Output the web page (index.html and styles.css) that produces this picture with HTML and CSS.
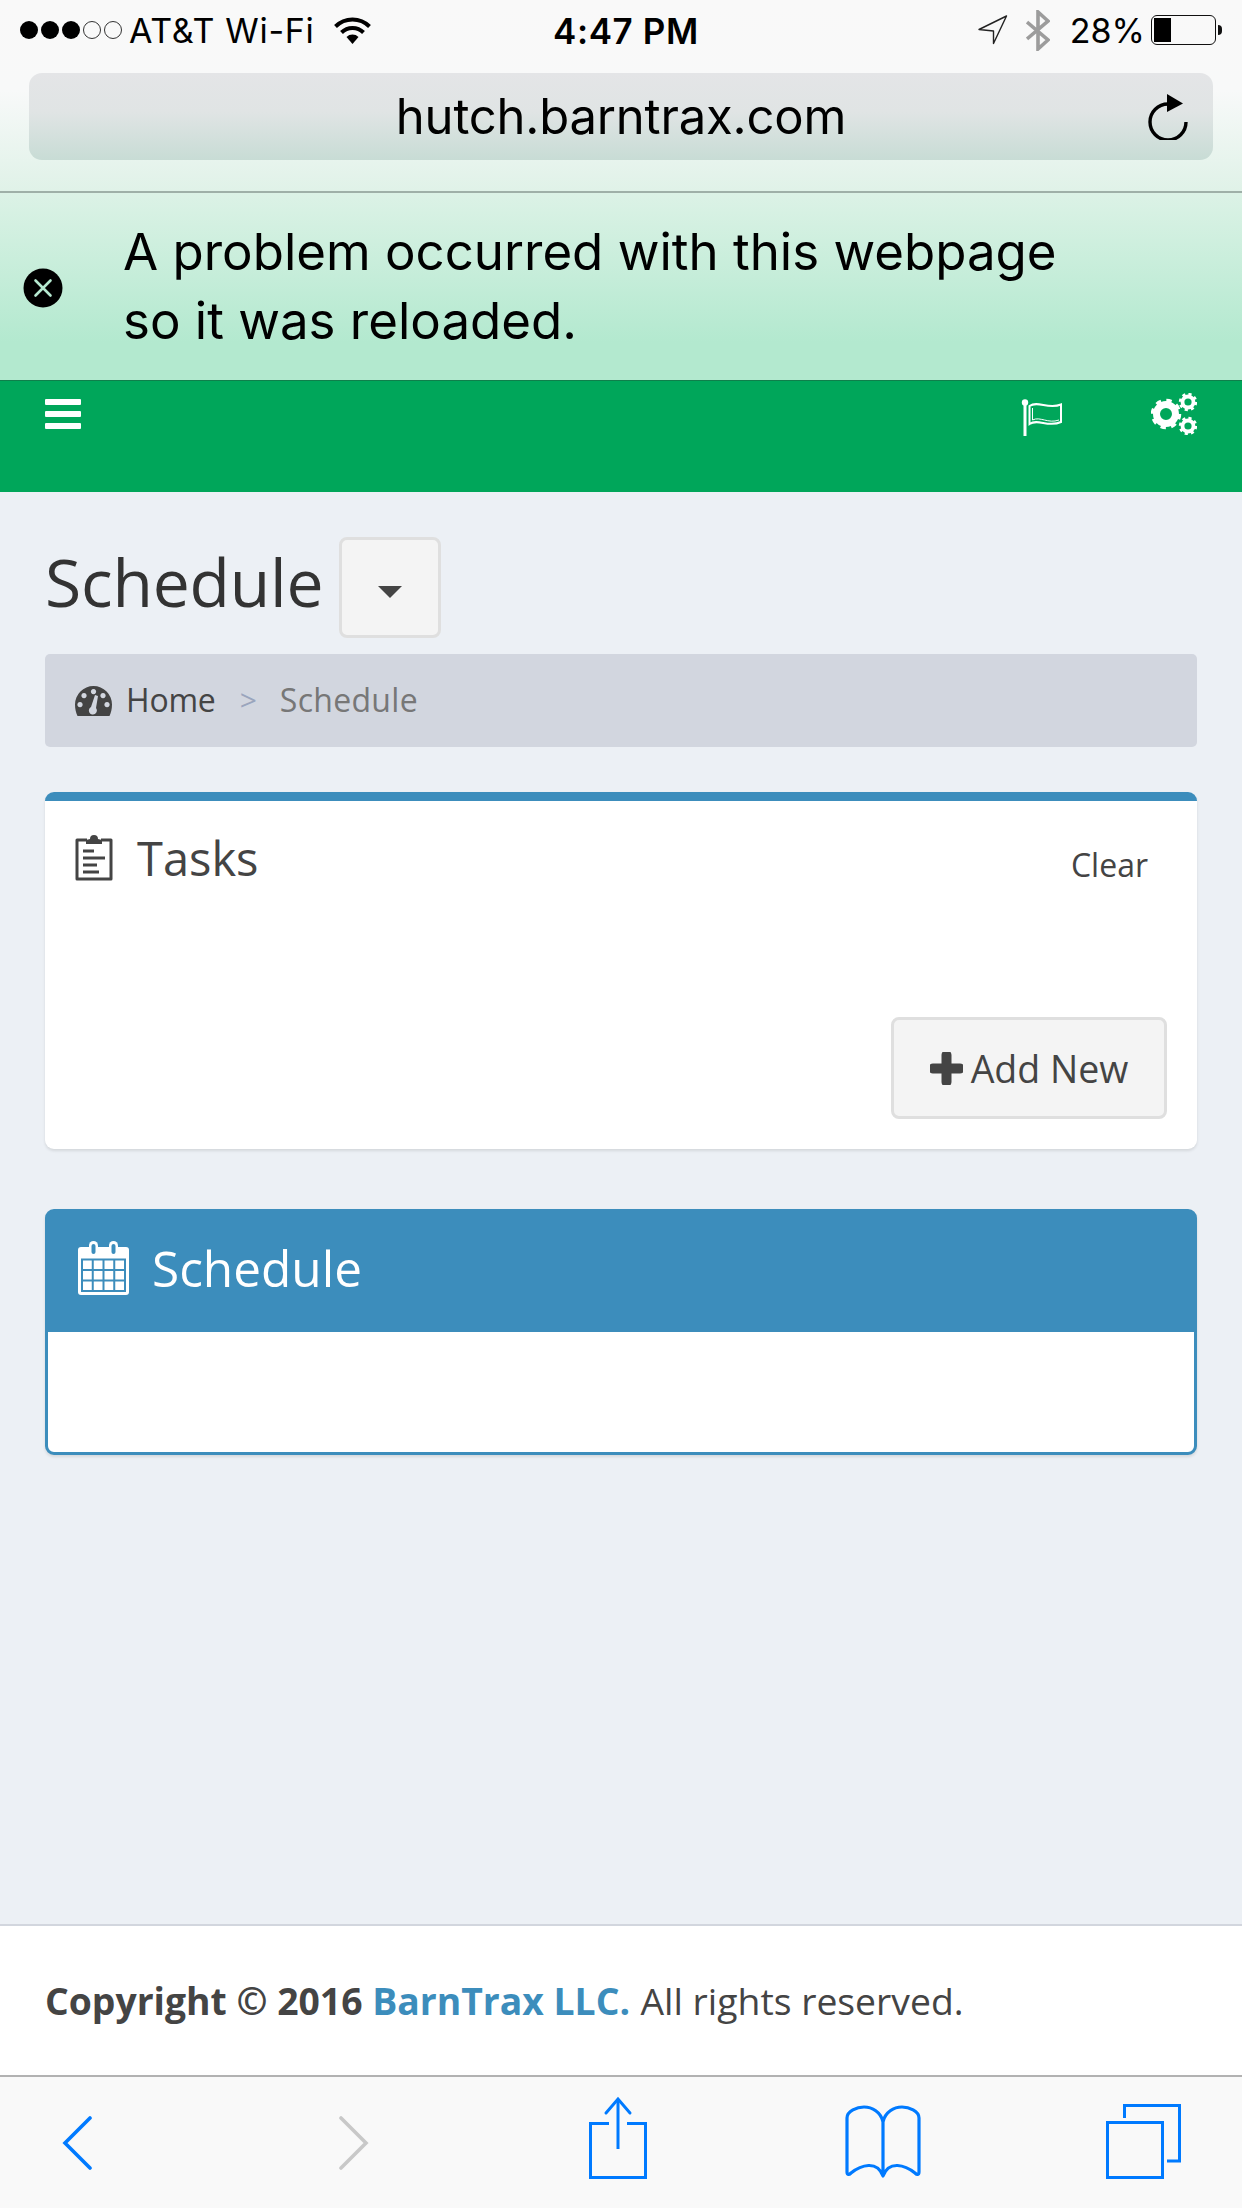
FILE: index.html
```html
<!DOCTYPE html>
<html lang="en">
<head>
    <meta charset="UTF-8">
    <meta name="viewport" content="width=device-width, initial-scale=1.0">
    <title>Schedule</title>
    <link rel="stylesheet" href="styles.css">
</head>
<body>
    <header class="chrome">
        <div class="status-bar">
            <div class="status-left">
                <div class="signal">
                    <span class="dot"></span><span class="dot"></span><span class="dot"></span>
                    <span class="dot empty"></span><span class="dot empty"></span>
                </div>
                <span class="carrier">AT&amp;T Wi-Fi</span>
                <svg class="wifi" width="37" height="28" viewBox="0 0 37 28">
                    <path d="M1.5 10.5 A24 24 0 0 1 35.5 10.5" fill="none" stroke="#000" stroke-width="4"/>
                    <path d="M7.5 16.5 A15.5 15.5 0 0 1 29.5 16.5" fill="none" stroke="#000" stroke-width="4"/>
                    <path d="M12.5 21 A8.5 8.5 0 0 1 24.5 21 L18.5 28 Z" fill="#000"/>
                </svg>
            </div>
            <span class="time">4:47 PM</span>
            <div class="status-right">
                <svg class="location" width="30" height="30" viewBox="0 0 30 30">
                    <path d="M28.5 1 L1 14.5 L15.5 16 L15.5 28.5 Z" fill="none" stroke="#222" stroke-width="1.4" stroke-linejoin="round"/>
                </svg>
                <svg class="bluetooth" width="24" height="41" viewBox="0 0 24 41">
                    <path d="M1 12 L22 30 L12 39 L12 2 L22 11 L1 29" fill="none" stroke="#9c9c9c" stroke-width="3.6"/>
                </svg>
                <span class="battery-text">28%</span>
                <div class="battery"><div class="battery-fill"></div></div>
                <div class="battery-nub"></div>
            </div>
        </div>
        <div class="url-bar">
            <span class="url">hutch.barntrax.com</span>
            <svg class="reload" width="42" height="46" viewBox="0 0 42 46">
                <path d="M21 10 A18 18 0 1 0 39 28" fill="none" stroke="#000" stroke-width="3.4"/>
                <path d="M20 0 L36 9.5 L20 18 Z" fill="#000"/>
            </svg>
        </div>
    </header>

    <div class="banner">
        <svg class="banner-close" width="40" height="40" viewBox="0 0 40 40">
            <circle cx="20" cy="20" r="19.5" fill="#000"/>
            <path d="M12.5 12.5 L27.5 27.5 M27.5 12.5 L12.5 27.5" stroke="#b5e9d0" stroke-width="2.6" stroke-linecap="round"/>
        </svg>
        <p class="banner-text">A problem occurred with this webpage<br>so it was reloaded.</p>
    </div>

    <nav class="navbar">
        <div class="hamburger"><span></span><span></span><span></span></div>
        <svg class="nav-flag" width="42" height="38" viewBox="0 0 42 38">
            <rect x="2.5" y="3" width="3" height="34" fill="#fff"/>
            <circle cx="4" cy="3.5" r="3.2" fill="#fff"/>
            <path d="M8.5 7 C17 1 27 11 40 5.5 L40 23 C27 29 17 19 8.5 25 Z" fill="none" stroke="#fff" stroke-width="2"/>
            <path d="M11.5 9 L11.5 21 C19 17 27 25 38 21" fill="none" stroke="#fff" stroke-width="1"/>
        </svg>
        <svg class="nav-cogs" width="46" height="42" viewBox="0 0 46 42">
            <circle cx="15" cy="21" r="9.5" fill="none" stroke="#fff" stroke-width="7"/>
            <circle cx="15" cy="21" r="13" fill="none" stroke="#fff" stroke-width="4.5" stroke-dasharray="5.1 5.1"/>
            <circle cx="37" cy="9" r="5.5" fill="none" stroke="#fff" stroke-width="3.8"/>
            <circle cx="37" cy="9" r="7.6" fill="none" stroke="#fff" stroke-width="3.2" stroke-dasharray="3 3"/>
            <circle cx="37" cy="33" r="5.5" fill="none" stroke="#fff" stroke-width="3.8"/>
            <circle cx="37" cy="33" r="7.6" fill="none" stroke="#fff" stroke-width="3.2" stroke-dasharray="3 3"/>
        </svg>
    </nav>

    <main class="content">
        <div class="page-title">
            <h1>Schedule</h1>
            <button class="btn btn-caret" type="button"><span class="caret"></span></button>
        </div>

        <div class="breadcrumb">
            <svg class="crumb-icon" width="37" height="30" viewBox="0 0 37 30">
                <path fill-rule="evenodd" fill="#444" d="M18.5 0 A18.5 18.5 0 0 1 37 18.5 C37 23 36 27 34.500 30 L2.500 30 C1 27 0 23 0 18.5 A18.5 18.5 0 0 1 18.500 0 Z M18.500 3 a2.600 2.600 0 1 0 .01 0 Z M9 7 a2.600 2.600 0 1 0 .01 0 Z M28 7 a2.600 2.600 0 1 0 .01 0 Z M5 16 a2.600 2.600 0 1 0 .01 0 Z M32 16 a2.600 2.600 0 1 0 .01 0 Z M20 9 L16 21 a4 4 0 1 0 5 1 L23 10 Z"/>
            </svg>
            <span class="crumb-home">Home</span>
            <span class="crumb-sep">&gt;</span>
            <span class="crumb-current">Schedule</span>
        </div>

        <section class="box box-tasks">
            <div class="box-head">
                <svg class="tasks-icon" width="38" height="48" viewBox="0 0 38 48">
                    <path d="M12 7 L2 7 L2 46 L36 46 L36 7 L26 7" fill="none" stroke="#444" stroke-width="3" stroke-linejoin="round"/>
                    <path d="M11 11 L11 7 L15 6 A4 4 0 1 1 23 6 L27 7 L27 11 Z" fill="#444"/>
                    <path d="M8 18 H19 M8 25 H30 M8 32 H22 M8 39 H24" stroke="#444" stroke-width="3"/>
                </svg>
                <h3 class="box-title">Tasks</h3>
                <a class="clear-link">Clear</a>
            </div>
            <div class="box-foot">
                <button class="btn btn-add" type="button">
                    <svg width="33" height="33" viewBox="0 0 33 33">
                        <path d="M16.500 3 V30 M3 16.500 H30" stroke="#444" stroke-width="10" stroke-linecap="round" stroke-linejoin="round" fill="none"/>
                    </svg>
                    <span>Add New</span>
                </button>
            </div>
        </section>

        <section class="box box-schedule">
            <div class="box-head-solid">
                <svg class="calendar-icon" width="51" height="54" viewBox="0 0 51 54">
                    <path fill="#fff" d="M3 6 H48 A3 3 0 0 1 51 9 V51 A3 3 0 0 1 48 54 H3 A3 3 0 0 1 0 51 V9 A3 3 0 0 1 3 6 Z"/>
                    <rect x="11" y="0" width="9" height="15" rx="4.500" fill="#fff"/>
                    <rect x="31" y="0" width="9" height="15" rx="4.500" fill="#fff"/>
                    <rect x="13.500" y="3" width="4" height="10" rx="2" fill="#3c8dbc"/>
                    <rect x="33.500" y="3" width="4" height="10" rx="2" fill="#3c8dbc"/>
                    <path d="M4 18.500 H47 V50 H4 Z M14.750 18.500 V50 M25.500 18.500 V50 M36.250 18.500 V50 M4 29 H47 M4 39.500 H47" fill="none" stroke="#3c8dbc" stroke-width="2"/>
                </svg>
                <h3 class="box-title light">Schedule</h3>
            </div>
            <div class="box-body"></div>
        </section>
    </main>

    <footer class="footer">
        <strong>Copyright &copy; 2016 <a class="footer-link">BarnTrax LLC.</a></strong> All rights reserved.
    </footer>

    <div class="toolbar">
        <svg class="tb-back" width="30" height="132" viewBox="0 0 30 132">
            <path d="M28 42 L3 67 L28 92" fill="none" stroke="#007aff" stroke-width="3.600" stroke-linecap="round"/>
        </svg>
        <svg class="tb-forward" width="30" height="132" viewBox="0 0 30 132">
            <path d="M2 42 L27 67 L2 92" fill="none" stroke="#c8c8c8" stroke-width="3.600" stroke-linecap="round"/>
        </svg>
        <svg class="tb-share" width="58" height="132" viewBox="0 0 58 132">
            <path d="M20 47.500 H1.500 V101.500 H56.500 V47.500 H38" fill="none" stroke="#007aff" stroke-width="3"/>
            <path d="M29 24 V73" fill="none" stroke="#007aff" stroke-width="3"/>
            <path d="M17 37 L29 23 L41 37" fill="none" stroke="#007aff" stroke-width="3" stroke-linecap="round"/>
        </svg>
        <svg class="tb-book" width="76" height="132" viewBox="0 0 76 132">
            <path d="M38 46 C36 36 27 31 19 31 C12 31 2 35 2 42 L2 96 C2 99 4 99 6 97 C16 89 32 84 38 100 C44 84 60 89 70 97 C72 99 74 99 74 96 L74 42 C74 35 64 31 57 31 C49 31 40 36 38 46 L38 99" fill="none" stroke="#007aff" stroke-width="3.200" stroke-linejoin="round"/>
        </svg>
        <svg class="tb-tabs" width="76" height="132" viewBox="0 0 76 132">
            <rect x="1.500" y="46.500" width="55" height="55" fill="none" stroke="#007aff" stroke-width="3"/>
            <path d="M18.500 42 V29.500 H73.500 V85 H61" fill="none" stroke="#007aff" stroke-width="3"/>
        </svg>
    </div>
</body>
</html>
```
FILE: styles.css
```css
* {
    box-sizing: border-box;
}
html, body {
    margin: 0;
    padding: 0;
}
body {
    width: 1242px;
    height: 2208px;
    display: flex;
    flex-direction: column;
    overflow: hidden;
    font-family: "Open Sans", "Noto Sans", sans-serif;
    background-color: #ecf0f5;
    color: #444;
}
h1, h3, p {
    margin: 0;
    font-weight: 400;
}

/* browser chrome */
.chrome {
    height: 193px;
    background: linear-gradient(#f9f9f9 0, #f8f9f9 90px, #e0f2e8 190px);
    border-bottom: 2px solid #9fb0a8;
    font-family: Inter, "Liberation Sans", sans-serif;
    color: #000;
}
.status-bar {
    height: 60px;
    display: flex;
    align-items: center;
    padding: 0 20px 0 20px;
    font-size: 34px;
}
.status-left {
    width: 533px;
    display: flex;
    align-items: center;
}
.signal {
    display: flex;
    gap: 3px;
    margin-right: 7px;
}
.dot {
    width: 18px;
    height: 18px;
    border-radius: 50%;
    background: #000;
}
.dot.empty {
    background: none;
    border: 1px solid #333;
}
.carrier {
    letter-spacing: 0.7px;
}
.wifi {
    margin-left: 19px;
}
.time {
    padding-top: 2px;
    font-size: 35px;
    font-weight: 600;
    letter-spacing: 0.6px;
}
.status-right {
    margin-left: auto;
    display: flex;
    align-items: center;
}
.location {
    margin-right: 18px;
}
.bluetooth {
    margin-right: 20px;
}
.battery {
    width: 65px;
    height: 30px;
    margin-left: 6px;
    padding: 2px;
    border: 1px solid #111;
    border-radius: 6px;
}
.battery-fill {
    width: 17px;
    height: 100%;
    background: #000;
}
.battery-nub {
    width: 4px;
    height: 10px;
    margin-left: 2px;
    border-radius: 0 4px 4px 0;
    background: #111;
}
.url-bar {
    height: 87px;
    margin: 13px 29px 0;
    padding-right: 24px;
    display: flex;
    align-items: center;
    justify-content: flex-end;
    position: relative;
    border-radius: 13px;
    background: linear-gradient(#e4e5e7, #e0e4e4 45%, #c8dcd5);
}
.url {
    position: absolute;
    left: 0;
    right: 0;
    text-align: center;
    font-size: 49px;
    font-weight: 400;
    letter-spacing: -0.2px;
    color: #000;
}

/* reload notice */
.banner {
    height: 188px;
    padding-left: 23px;
    display: flex;
    align-items: center;
    background: linear-gradient(#dcf2e6, #b3e9cf 80%);
    border-bottom: 1px solid #0f7f4b;
    font-family: Inter, "Liberation Sans", sans-serif;
}
.banner-close {
    margin-top: 2px;
}
.banner-text {
    margin: -2px 0 0 60px;
    font-size: 51px;
    line-height: 69px;
    color: #000;
}

/* site header */
.navbar {
    height: 111px;
    display: flex;
    align-items: flex-start;
    padding: 18px 0 0 45px;
    background-color: #00a65a;
}
.hamburger {
    width: 36px;
    display: flex;
    flex-direction: column;
    gap: 6px;
}
.hamburger span {
    height: 6px;
    border-radius: 1px;
    background: #fff;
}
.nav-flag {
    margin-left: auto;
}
.nav-cogs {
    margin: -6px 45px 0 88px;
}

/* page */
.content {
    flex: 1;
    padding: 0 45px;
}
.page-title {
    display: flex;
    align-items: flex-start;
    height: 101px;
    margin-top: 45px;
}
.page-title h1 {
    font-size: 66px;
    line-height: 88px;
    color: #333;
    letter-spacing: -0.2px;
}
.btn {
    display: flex;
    align-items: center;
    justify-content: center;
    border: 3px solid #dfdfdf;
    border-radius: 8px;
    background-color: #f4f4f4;
    font-family: inherit;
    color: #444;
}
.btn-caret {
    width: 102px;
    height: 101px;
    margin-left: 16px;
    padding-top: 10px;
}
.caret {
    width: 0;
    height: 0;
    border-top: 12px solid #444;
    border-left: 12px solid transparent;
    border-right: 12px solid transparent;
}
.breadcrumb {
    height: 93px;
    margin-top: 16px;
    padding: 0 0 2px 30px;
    display: flex;
    align-items: center;
    border-radius: 5px;
    background-color: #d2d6df;
    font-size: 32px;
}
.crumb-icon {
    margin-top: 2px;
}
.crumb-home {
    margin-left: 14px;
    letter-spacing: -0.2px;
}
.crumb-sep {
    margin: 0 23px 0 24px;
    color: #9aa5bd;
    font-size: 30px;
}
.crumb-current {
    color: #777;
    letter-spacing: 0.3px;
}
.box {
    border-radius: 9px;
    background: #fff;
    box-shadow: 0 2px 3px rgba(0, 0, 0, 0.1);
}
.box-tasks {
    height: 357px;
    margin-top: 45px;
    border-top: 9px solid #3c8dbc;
    display: flex;
    flex-direction: column;
}
.box-head {
    display: flex;
    align-items: center;
    padding: 25px 49px 0 30px;
}
.tasks-icon {
    flex-shrink: 0;
}
.box-title {
    margin: 2px 0 0 24px;
    font-size: 47px;
    line-height: 60px;
    color: #444;
}
.clear-link {
    margin-left: auto;
    padding-top: 14px;
    font-size: 32px;
}
.box-foot {
    margin-top: auto;
    padding: 0 30px 30px;
    display: flex;
    justify-content: flex-end;
}
.btn-add {
    width: 276px;
    height: 102px;
    gap: 8px;
    font-size: 37.5px;
}
.box-schedule {
    height: 246px;
    margin-top: 60px;
    border: 3px solid #3c8dbc;
    display: flex;
    flex-direction: column;
}
.box-head-solid {
    height: 120px;
    padding: 29px 0 0 30px;
    display: flex;
    align-items: flex-start;
    background-color: #3c8dbc;
}
.box-title.light {
    margin: -3px 0 0 23px;
    font-size: 49.5px;
    color: #fff;
}
.box-body {
    flex: 1;
}

/* site footer */
.footer {
    height: 151px;
    padding-left: 45px;
    display: flex;
    align-items: center;
    gap: 0.28em;
    background: #fff;
    border-top: 2px solid #d2d6de;
    font-size: 37.3px;
    color: #444;
}
.footer strong {
    font-weight: 700;
}
.footer-link {
    color: #3c8dbc;
}

/* safari toolbar */
.toolbar {
    height: 133px;
    flex-shrink: 0;
    display: flex;
    padding-left: 62px;
    border-top: 2px solid #b2b2b2;
    background-color: #f9f9f9;
}
.toolbar svg {
    margin-top: -1px;
}
.tb-forward {
    margin-left: 247px;
}
.tb-share {
    margin-left: 220px;
}
.tb-book {
    margin-left: 198px;
}
.tb-tabs {
    margin-left: 185px;
}
```
